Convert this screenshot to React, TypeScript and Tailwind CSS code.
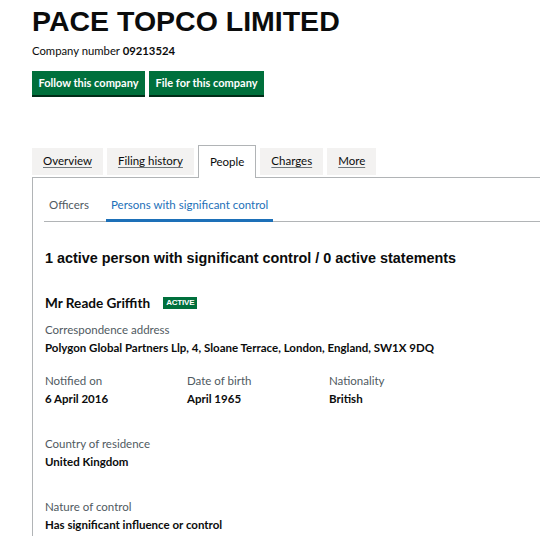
import React from "react";

const body = "font-['Lato','Noto_Sans',sans-serif]";

function Tab({ label, active }: { label: string; active?: boolean }) {
  if (active) {
    return (
      <div className="h-[33px] -mb-px px-[11px] pt-[8px] bg-white border border-b-0 border-[#b1b4b6] text-[11.5px] leading-[16px] text-[#0b0c0c]">
        {label}
      </div>
    );
  }
  return (
    <div className="h-[27px] mb-[2px] px-[11px] pt-[5px] bg-[#f3f2f1] text-[11.5px] leading-[16px] text-[#0b0c0c]">
      <span className="underline decoration-[#6f777b] underline-offset-[2px]">{label}</span>
    </div>
  );
}

function Field({ label, value, className }: { label: string; value: string; className?: string }) {
  return (
    <div className={className}>
      <div className="text-[11.5px] leading-[18px] text-[#505a5f]">{label}</div>
      <div className="text-[11.5px] leading-[18px] font-bold text-[#0b0c0c]">{value}</div>
    </div>
  );
}

export default function App() {
  return (
    <div className={`w-[540px] h-[536px] overflow-hidden bg-white ${body}`}>
      <div className="pl-[32px]">
        <h1 className="pt-[6px] text-[28.5px] leading-[30px] font-bold text-[#0b0c0c] font-['Liberation_Sans',Arial,sans-serif]">
          PACE TOPCO LIMITED
        </h1>
        <p className="mt-[7px] text-[11.3px] leading-[16px] text-[#0b0c0c]">
          Company number <span className="font-bold">09213524</span>
        </p>
        <div className="mt-[12px] flex gap-[4px]">
          <div className="h-[24px] px-[6.5px] flex items-center bg-[#00703c] text-white text-[11px] font-bold shadow-[0_2px_0_#002d18]">
            Follow this company
          </div>
          <div className="h-[24px] px-[6.5px] flex items-center bg-[#00703c] text-white text-[11px] font-bold shadow-[0_2px_0_#002d18]">
            File for this company
          </div>
        </div>

        <div className="mt-[50px] flex items-end gap-[4px]">
          <Tab label="Overview" />
          <Tab label="Filing history" />
          <Tab label="People" active />
          <Tab label="Charges" />
          <Tab label="More" />
        </div>

        <div className="border-l border-t border-[#b1b4b6] h-[400px]">
          <div className="ml-[11px] mt-[19px] flex gap-[12px] border-b border-[#b1b4b6]">
            <div className="px-[5px] pb-[8px] text-[11.5px] leading-[16px] text-[#505a5f]">Officers</div>
            <div className="px-[5px] pb-[5px] -mb-px border-b-[3px] border-[#1d70b8] text-[11.5px] leading-[16px] text-[#1d70b8]">
              Persons with significant control
            </div>
          </div>

          <div className="pl-[12px]">
            <h2 className="mt-[26px] text-[14.4px] leading-[20px] font-bold text-[#0b0c0c] font-['Liberation_Sans',Arial,sans-serif]">
              1 active person with significant control / 0 active statements
            </h2>

            <div className="mt-[25px] flex items-center">
              <span className="text-[13.6px] leading-[20px] font-bold text-[#0b0c0c]">Mr Reade Griffith</span>
              <span className="ml-[13px] px-[3px] h-[12px] flex items-center bg-[#00703c] text-white text-[8px] leading-[10px] font-extrabold tracking-tight font-['Liberation_Sans',Arial,sans-serif]">
                ACTIVE
              </span>
            </div>

            <Field className="mt-[8px]" label="Correspondence address" value="Polygon Global Partners Llp, 4, Sloane Terrace, London, England, SW1X 9DQ" />

            <div className="mt-[15px] grid grid-cols-[142px_142px_1fr]">
              <Field label="Notified on" value="6 April 2016" />
              <Field label="Date of birth" value="April 1965" />
              <Field label="Nationality" value="British" />
            </div>

            <Field className="mt-[27px]" label="Country of residence" value="United Kingdom" />
            <Field className="mt-[27px]" label="Nature of control" value="Has significant influence or control" />
          </div>
        </div>
      </div>
    </div>
  );
}
